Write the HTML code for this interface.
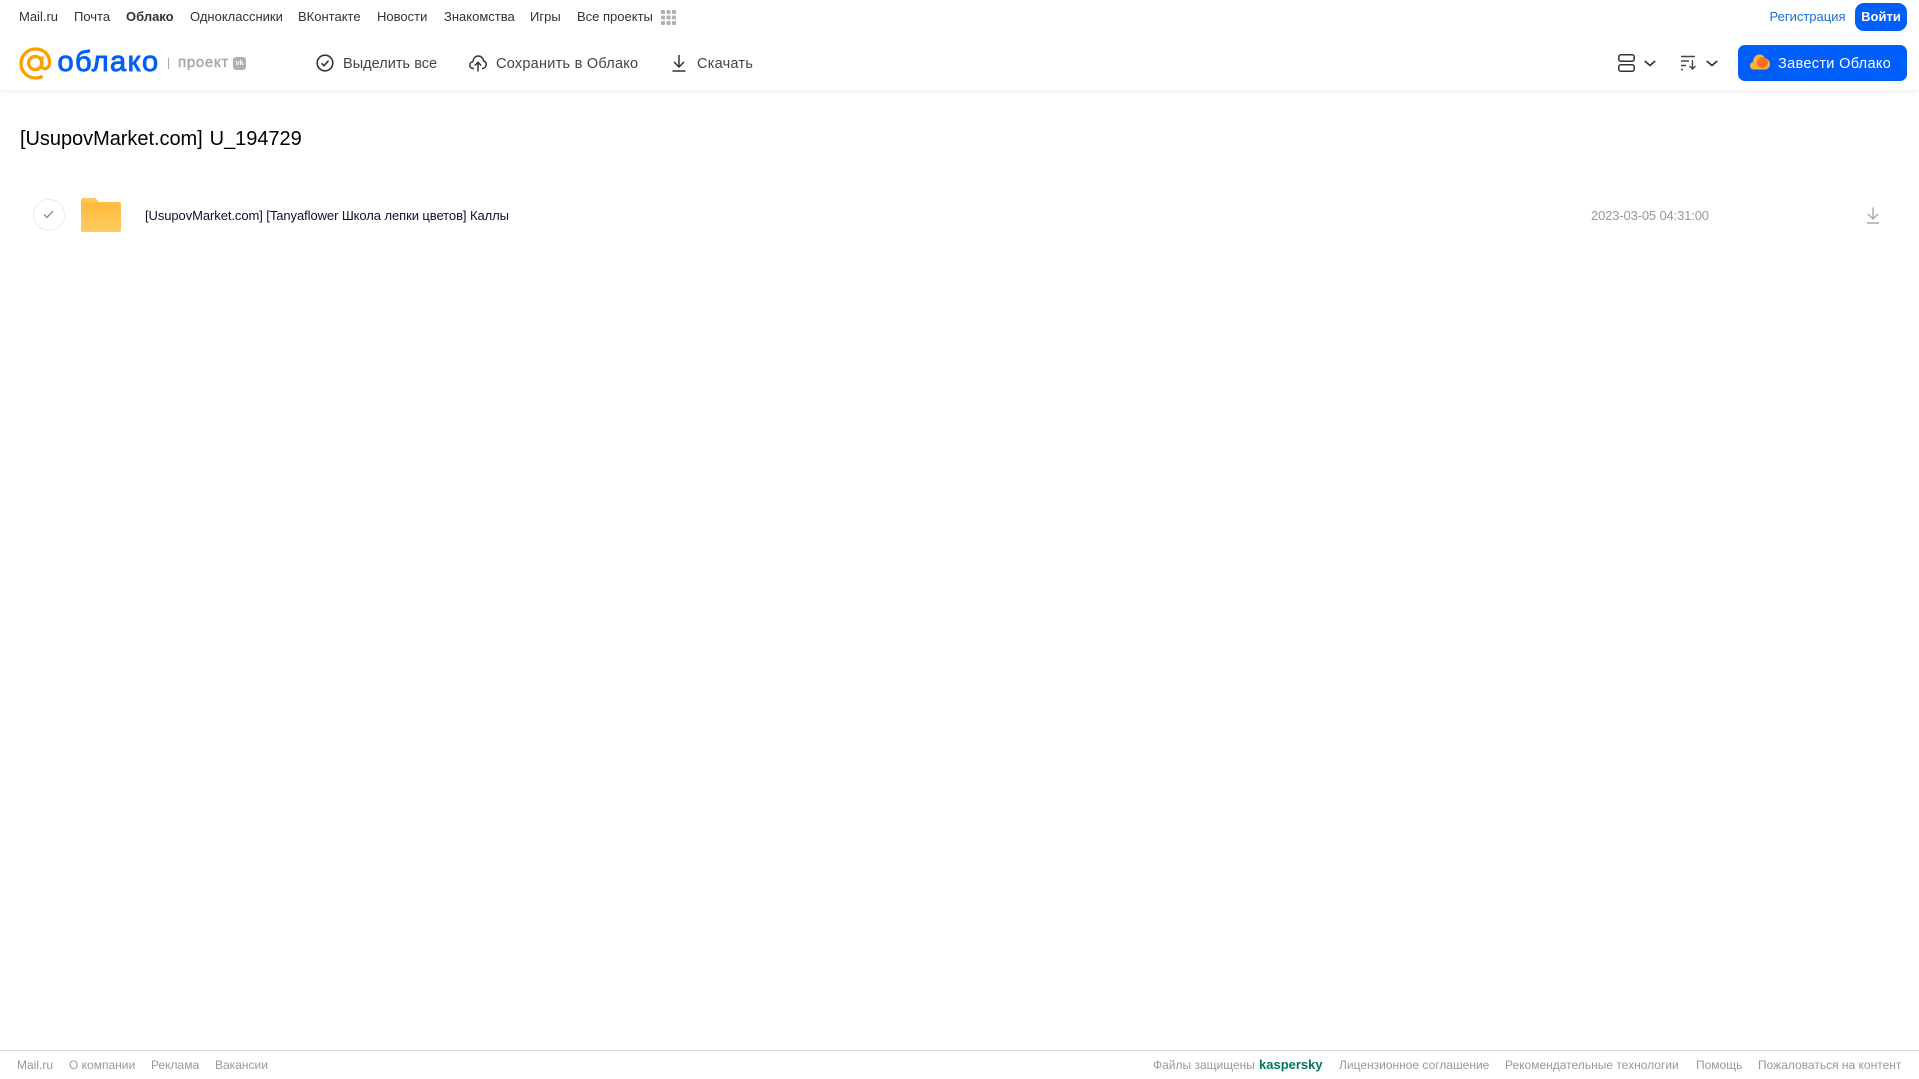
<!DOCTYPE html>
<html lang="ru"><head><meta charset="utf-8"><title>Облако</title>
<style>
html,body{margin:0;padding:0;width:1919px;height:1079px;overflow:hidden;background:#fff;font-family:"Liberation Sans",sans-serif}
.t{position:absolute;white-space:nowrap;line-height:16px}
.n{top:9px;font-size:13px;color:#333;height:16px}
.a{top:55.500px;font-size:14.500px;color:#444;height:16px;letter-spacing:.25px}
.f{top:1057px;font-size:12px;color:#999}
svg{position:absolute;overflow:visible}
</style></head><body>
<div style="position:absolute;left:0;top:0;width:1919px;height:90px;background:#fff;box-shadow:0 1px 6px rgba(0,0,0,.09)"></div>

<span class="t n" style="left:19px">Mail.ru</span>
<span class="t n" style="left:74px">Почта</span>
<span class="t n" style="left:126px;font-weight:bold">Облако</span>
<span class="t n" style="left:190px">Одноклассники</span>
<span class="t n" style="left:298px">ВКонтакте</span>
<span class="t n" style="left:377px">Новости</span>
<span class="t n" style="left:444px">Знакомства</span>
<span class="t n" style="left:530px">Игры</span>
<span class="t n" style="left:577px">Все проекты</span>
<svg style="left:661px;top:10px" width="15" height="15" fill="#b0b0b0"><rect width="4" height="4" rx="1"/><rect x="5.500" width="4" height="4" rx="1"/><rect x="11" width="4" height="4" rx="1"/><rect y="5.500" width="4" height="4" rx="1"/><rect x="5.500" y="5.500" width="4" height="4" rx="1"/><rect x="11" y="5.500" width="4" height="4" rx="1"/><rect y="11" width="4" height="4" rx="1"/><rect x="5.500" y="11" width="4" height="4" rx="1"/><rect x="11" y="11" width="4" height="4" rx="1"/></svg>

<span class="t n" style="left:1769.500px;color:#1a6fe0">Регистрация</span>
<div style="position:absolute;left:1855px;top:3px;width:52px;height:28px;background:#005ff9;border-radius:9px;color:#fff;font-size:13px;font-weight:bold;line-height:28px;text-align:center">Войти</div>

<svg style="left:19px;top:47px" width="33" height="33" viewBox="0 0 33 33" fill="none" stroke="#ff9e00" stroke-width="3.300"><circle cx="16.200" cy="16" r="6.600"/><path d="M22.800 9.500v8.500c0 5.500 7.700 5 7.700-2.500C30.500 7.500 24.500 2 16.500 2 8.500 2 2 8.500 2 16.500S8.500 31 16.500 31c3 0 5-.6 7-1.800"/></svg>
<span class="t" style="left:57.500px;top:43px;height:38px;line-height:38px;font-size:29px;letter-spacing:1.400px;color:#005ff9;-webkit-text-stroke:.9px #005ff9">облако</span>
<div style="position:absolute;left:168px;top:58px;width:1px;height:11px;background:#aaa"></div>
<span class="t" style="left:178px;top:55px;font-size:15px;color:#a5a5a5;letter-spacing:.7px;-webkit-text-stroke:.4px #a5a5a5">проект</span>
<div style="position:absolute;left:233px;top:57px;width:13px;height:13px;background:#b0b0b0;border-radius:3px;color:#fff;font-size:7px;font-weight:bold;line-height:13px;text-align:center">vk</div>

<svg style="left:316px;top:54px" width="18" height="18" viewBox="0 0 18 18" fill="none" stroke="#333" stroke-width="1.600"><circle cx="9" cy="9" r="7.800"/><path d="M5.500 9.300l2.500 2.400 4.500-5"/></svg>
<span class="t a" style="left:343px;letter-spacing:.03px">Выделить все</span>
<svg style="left:469px;top:54px" width="18" height="18" viewBox="0 0 18 18" fill="none" stroke="#333" stroke-width="1.500"><path d="M5 14.500H4C2 14.500 .8 13 .8 11.200c0-1.800 1.300-3.200 3-3.400C4.300 4.500 6.300 2 9.300 2c3 0 5 2.300 5.300 5 1.700.3 2.800 2 2.600 3.800-.2 2-1.800 3.700-3.700 3.700H13"/><path d="M9 17.500V8.500M5.800 11.500L9 8.300l3.200 3.200"/></svg>
<span class="t a" style="left:496px">Сохранить в Облако</span>
<svg style="left:672px;top:54px" width="14" height="18" viewBox="0 0 14 18" fill="none" stroke="#333" stroke-width="1.500"><path d="M7 1v11.500M2 8l5 5 5-5M.5 17h13"/></svg>
<span class="t a" style="left:697px">Скачать</span>

<svg style="left:1618px;top:54px" width="17" height="18" viewBox="0 0 17 18" fill="none" stroke="#333" stroke-width="1.500"><rect x=".8" y=".8" width="15.400" height="6.400" rx="2"/><rect x=".8" y="10.800" width="15.400" height="6.400" rx="2"/></svg>
<svg style="left:1644px;top:60px" width="12" height="7" viewBox="0 0 12 7" fill="none" stroke="#333" stroke-width="1.700"><path d="M.8 1l5.200 4.500L11.200 1"/></svg>
<svg style="left:1681px;top:55px" width="16" height="15" viewBox="0 0 16 15" fill="none" stroke="#444" stroke-width="1.400"><path d="M0 1.500h14M0 6h8M0 10.500h5M0 14.500h2M11.500 5v9M8.500 11l3 3 3-3"/></svg>
<svg style="left:1706px;top:60px" width="12" height="7" viewBox="0 0 12 7" fill="none" stroke="#333" stroke-width="1.700"><path d="M.8 1l5.200 4.500L11.200 1"/></svg>

<div style="position:absolute;left:1738px;top:45px;width:169px;height:36px;background:#005ff9;border-radius:7px"></div>
<svg style="left:1750px;top:54px" width="20" height="16" viewBox="0 0 20 16"><path d="M4 15.500C1.500 15.500 0 13.800 0 11.700c0-2 1.200-3.200 2.800-3.600C3.200 3.500 6 .5 9.500.5c2.500 0 4.700 1.400 5.700 3.700 2.800.6 4.800 3 4.800 5.800 0 3-2.200 5.500-5 5.500z" fill="#ffb03a"/><circle cx="12.500" cy="8.500" r="5.500" fill="#f5711f"/></svg>
<span class="t" style="left:1778px;top:55.500px;height:16px;font-size:14.500px;color:#fff;letter-spacing:.33px">Завести Облако</span>

<span class="t" style="left:20px;top:126px;height:26px;line-height:26px;font-size:20px;color:#000;word-spacing:1.500px;letter-spacing:-.04px">[UsupovMarket.com] U_194729</span>

<div style="position:absolute;left:33px;top:199px;width:30px;height:30px;border:1px solid #ececec;border-radius:50%"></div>
<svg style="left:43px;top:210px" width="11" height="9" viewBox="0 0 11 9" fill="none" stroke="#8c8c8c" stroke-width="1.300"><path d="M1 4.500l3 3 6-6.500"/></svg>
<svg style="left:81px;top:198px" width="40" height="34" viewBox="0 0 40 34"><path d="M2.500 0h10c1.500 0 2.300.6 3.200 1.500L18 4h19.500c1.400 0 2.500 1.100 2.500 2.500V32c0 1.100-.9 2-2 2H2c-1.100 0-2-.9-2-2V2.500C0 1.100 1.100 0 2.500 0z" fill="#ffc85a"/><path d="M0 6c0-1 .9-1.800 2-1.800h36c1.100 0 2 .8 2 1.800v26c0 1.100-.9 2-2 2H2c-1.100 0-2-.9-2-2z" fill="url(#g)"/><defs><linearGradient id="g" x1="0" y1="0" x2="0" y2="1"><stop offset="0" stop-color="#ffbc3c"/><stop offset="1" stop-color="#ffcb60"/></linearGradient></defs></svg>
<span class="t" style="left:145px;top:207.500px;font-size:13px;letter-spacing:-.08px;color:#1a0a30">[UsupovMarket.com] [Tanyaflower Школа лепки цветов] Каллы</span>
<span class="t" style="left:1591px;top:207.500px;font-size:13px;letter-spacing:-.15px;color:#999">2023-03-05 04:31:00</span>
<svg style="left:1866px;top:207px" width="14" height="17" viewBox="0 0 14 17" fill="none" stroke="#a8a8a8" stroke-width="1.400"><path d="M7 .5v11M2 7l5 5 5-5M1 16h12"/></svg>

<div style="position:absolute;left:0;top:1050px;width:1919px;height:1px;background:#d9d9d9"></div>
<span class="t f" style="left:17px">Mail.ru</span>
<span class="t f" style="left:69px">О компании</span>
<span class="t f" style="left:151px">Реклама</span>
<span class="t f" style="left:215px">Вакансии</span>
<span class="t f" style="left:1153px">Файлы защищены</span>
<span class="t f" style="left:1259px;font-size:13px;font-weight:bold;color:#00795f">kaspersky</span>
<span class="t f" style="left:1339px">Лицензионное соглашение</span>
<span class="t f" style="left:1505px">Рекомендательные технологии</span>
<span class="t f" style="left:1696px">Помощь</span>
<span class="t f" style="left:1758px">Пожаловаться на контент</span>
</body></html>
